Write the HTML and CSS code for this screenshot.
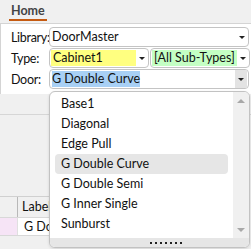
FILE: index.html
```html
<!DOCTYPE html>
<html lang="en">
<head>
    <meta charset="UTF-8">
    <title>Door Picker</title>
    <link rel="stylesheet" href="styles.css">
</head>
<body>
    <div class="ribbon">
        <span class="tab">Home</span>
    </div>
    <div class="panel">
        <div class="row">
            <label>Library:</label>
            <div class="combo">
                <span class="val">DoorMaster</span>
                <span class="arrow"></span>
            </div>
        </div>
        <div class="row">
            <label>Type:</label>
            <div class="combo half">
                <span class="val yellow">Cabinet1</span>
                <span class="arrow"></span>
            </div>
            <div class="combo half">
                <span class="val green">[All Sub-Types]</span>
                <span class="arrow"></span>
            </div>
        </div>
        <div class="row">
            <label>Door:</label>
            <div class="combo open">
                <span class="val"><span class="sel">G Double Curve</span></span>
                <span class="arrow btn"></span>
            </div>
        </div>
    </div>
    <div class="toolbar"></div>
    <div class="grid-area">
        <div class="grid">
            <div class="grid-head">
                <div class="gutter"></div>
                <div class="cell">Label</div>
            </div>
            <div class="grid-row">
                <div class="gutter pink"></div>
                <div class="cell">G Do</div>
            </div>
        </div>
    </div>

    <div class="dropdown">
        <div class="dd-body">
            <ul class="dd-list">
                <li>Base1</li>
                <li>Diagonal</li>
                <li>Edge Pull</li>
                <li class="hover">G Double Curve</li>
                <li>G Double Semi</li>
                <li>G Inner Single</li>
                <li>Sunburst</li>
            </ul>
            <div class="dd-scroll">
                <span class="up"></span>
                <span class="down"></span>
            </div>
        </div>
        <div class="dd-grip">
            <i></i><i></i><i></i><i></i><i></i><i></i><i></i>
        </div>
    </div>
</body>
</html>
```

FILE: styles.css
```css
* {
    box-sizing: border-box;
}
html, body {
    margin: 0;
    height: 100%;
}
body {
    font-family: "Segoe UI", Lato, "Noto Sans", sans-serif;
    font-size: 12.5px;
    color: #111;
    background: #f0f0f0;
    position: relative;
    overflow: hidden;
}
.ribbon {
    height: 24px;
    background: #f0f0f0;
    border-bottom: 1px solid #d4d4d4;
    padding-left: 9px;
}
.tab {
    display: inline-block;
    height: 21px;
    padding: 3px 2px 0;
    font-weight: bold;
    color: #444;
    border-bottom: 2px solid #c55a11;
}
.panel {
    background: #fff;
    border-left: 1px solid #d4d4d4;
    padding: 3px 0 5px 10px;
    display: flex;
    flex-direction: column;
    gap: 1px;
}
.row {
    display: flex;
    height: 20px;
    align-items: center;
}
.row label {
    width: 38px;
    flex: none;
    letter-spacing: -0.3px;
}
.combo {
    width: 200px;
    height: 20px;
    border: 1px solid #c4c4c4;
    border-radius: 4px;
    background: #fff;
    display: flex;
    align-items: stretch;
    overflow: hidden;
}
.combo.half {
    width: 100px;
}
.combo.half + .combo.half {
    margin-left: 1px;
}
.val {
    flex: 1;
    padding-left: 2px;
    line-height: 18px;
    white-space: nowrap;
    overflow: hidden;
}
.val.yellow {
    background: #ffff80;
    margin: 1px 0 1px 1px;
    line-height: 16px;
}
.val.green {
    background: #c4ffc4;
    margin: 1px 0 1px 1px;
    line-height: 16px;
}
.sel {
    background: #a8d0f5;
    padding-bottom: 1px;
}
.arrow {
    width: 12px;
    flex: none;
    display: flex;
    align-items: center;
    justify-content: center;
}
.arrow::after {
    content: "";
    border-left: 3px solid transparent;
    border-right: 3px solid transparent;
    border-top: 3px solid #222;
}
.arrow.btn {
    background: #e3e3e3;
    margin: 0 1px 0 0;
}
.toolbar {
    height: 21px;
    background: #f0f0f0;
    border-bottom: 1px solid #d6d6d6;
}
.grid-area {
    padding-top: 81px;
    background: #f0f0f0;
}
.grid {
    border-top: 1px solid #d0d0d0;
    width: 49px;
}
.grid-head, .grid-row {
    display: flex;
    border-bottom: 1px solid #d8d8d8;
}
.grid-head {
    height: 21px;
    background: #f0f0f0;
}
.grid-row {
    height: 18px;
    background: #fff;
}
.gutter {
    width: 18px;
    flex: none;
    border-right: 1px solid #b8b8b8;
}
.gutter.pink {
    background: #f6e4f6;
    border-right-color: #e0e0e0;
}
.cell {
    padding-left: 4px;
    white-space: nowrap;
    line-height: 19px;
}
.grid-row .cell {
    padding-left: 6px;
    line-height: 17px;
}
.dropdown {
    position: absolute;
    left: 49px;
    top: 91px;
    width: 201px;
    height: 157px;
    border: 1px solid #c2c2c2;
    border-radius: 6px;
    background: #fff;
    overflow: hidden;
    box-shadow: 0 1px 3px rgba(0, 0, 0, 0.12);
    display: flex;
    flex-direction: column;
}
.dd-body {
    flex: 1;
    display: flex;
}
.dd-list {
    list-style: none;
    margin: 0;
    padding: 2px 5px 0 5px;
    flex: 1;
}
.dd-list li {
    height: 20px;
    line-height: 20px;
    padding-left: 6px;
    border-radius: 4px;
    white-space: nowrap;
}
.dd-list li.hover {
    background: #e6e6e6;
}
.dd-scroll {
    width: 16px;
    background: #f0f0f0;
    display: flex;
    flex-direction: column;
    justify-content: space-between;
    align-items: center;
    padding: 7px 0 6px;
}
.dd-scroll .up {
    border-left: 4px solid transparent;
    border-right: 4px solid transparent;
    border-bottom: 4px solid #a8a8a8;
}
.dd-scroll .down {
    border-left: 4px solid transparent;
    border-right: 4px solid transparent;
    border-top: 4px solid #a8a8a8;
}
.dd-grip {
    height: 9px;
    background: #e6e6e6;
    display: flex;
    justify-content: center;
    align-items: center;
    gap: 3px;
    padding-left: 32px;
}
.dd-grip i {
    width: 2px;
    height: 2px;
    background: #222;
}
```
